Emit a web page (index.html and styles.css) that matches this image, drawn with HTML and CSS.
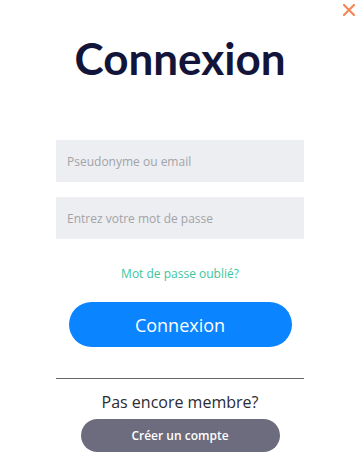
FILE: index.html
```html
<!DOCTYPE html>
<html lang="fr">
  <head>
    <meta charset="UTF-8" />
    <meta name="viewport" content="width=device-width, initial-scale=1.0" />
    <title>Connexion</title>
    <link rel="stylesheet" href="styles.css">
  </head>
  <body>
    <div class="modal">
      <button class="close" aria-label="Fermer">
        <svg width="12" height="12" viewBox="0 0 12 12">
          <path d="M1 1 L11 11 M11 1 L1 11" stroke="#f4875a" stroke-width="2.2" stroke-linecap="round" />
        </svg>
      </button>
      <h1 class="title">Connexion</h1>
      <form class="form">
        <input type="text" class="field" placeholder="Pseudonyme ou email" />
        <input type="password" class="field" placeholder="Entrez votre mot de passe" />
        <a href="#" class="forgot">Mot de passe oublié?</a>
        <button type="button" class="login">Connexion</button>
      </form>
      <hr class="divider" />
      <p class="signup-text">Pas encore membre?</p>
      <button class="signup">Créer un compte</button>
    </div>
  </body>
</html>
```

FILE: styles.css
```css
body {
  margin: 0;
  background-color: #fff;
  font-family: "Open Sans", Lato, sans-serif;
}

.modal {
  position: relative;
  width: 360px;
  height: 476px;
  display: flex;
  flex-direction: column;
  align-items: center;
}

.close {
  position: absolute;
  top: 4px;
  right: 5px;
  padding: 0;
  border: none;
  background: none;
  cursor: pointer;
}

.title {
  margin: 32px 0 0;
  font-family: Lato, sans-serif;
  font-size: 44px;
  font-weight: 700;
  color: #12143a;
}

.form {
  margin-top: 56px;
  display: flex;
  flex-direction: column;
  align-items: center;
}

.field {
  width: 248px;
  height: 42px;
  box-sizing: border-box;
  margin-bottom: 15px;
  padding: 0 11px;
  border: none;
  background-color: #eceef1;
  font-family: "Open Sans", sans-serif;
  font-size: 12px;
  color: #333;
}

.field::placeholder {
  color: #a3a3a8;
}

.forgot {
  margin-top: 11px;
  font-size: 12px;
  color: #3cc59d;
  text-decoration: none;
}

.login {
  margin-top: 20px;
  width: 223px;
  height: 45px;
  border: none;
  border-radius: 23px;
  background-color: #0a84ff;
  color: #fff;
  font-family: "Open Sans", sans-serif;
  font-size: 18px;
  cursor: pointer;
}

.divider {
  width: 248px;
  margin: 31px 0 0;
  border: none;
  border-top: 1px solid #666;
}

.signup-text {
  margin: 12px 0 0;
  font-size: 16px;
  color: #2b2b33;
}

.signup {
  margin-top: 6px;
  width: 199px;
  height: 33px;
  border: none;
  border-radius: 17px;
  background-color: #6c6c7e;
  color: #fff;
  font-family: "Open Sans", sans-serif;
  font-size: 12px;
  font-weight: 600;
  cursor: pointer;
}
```
